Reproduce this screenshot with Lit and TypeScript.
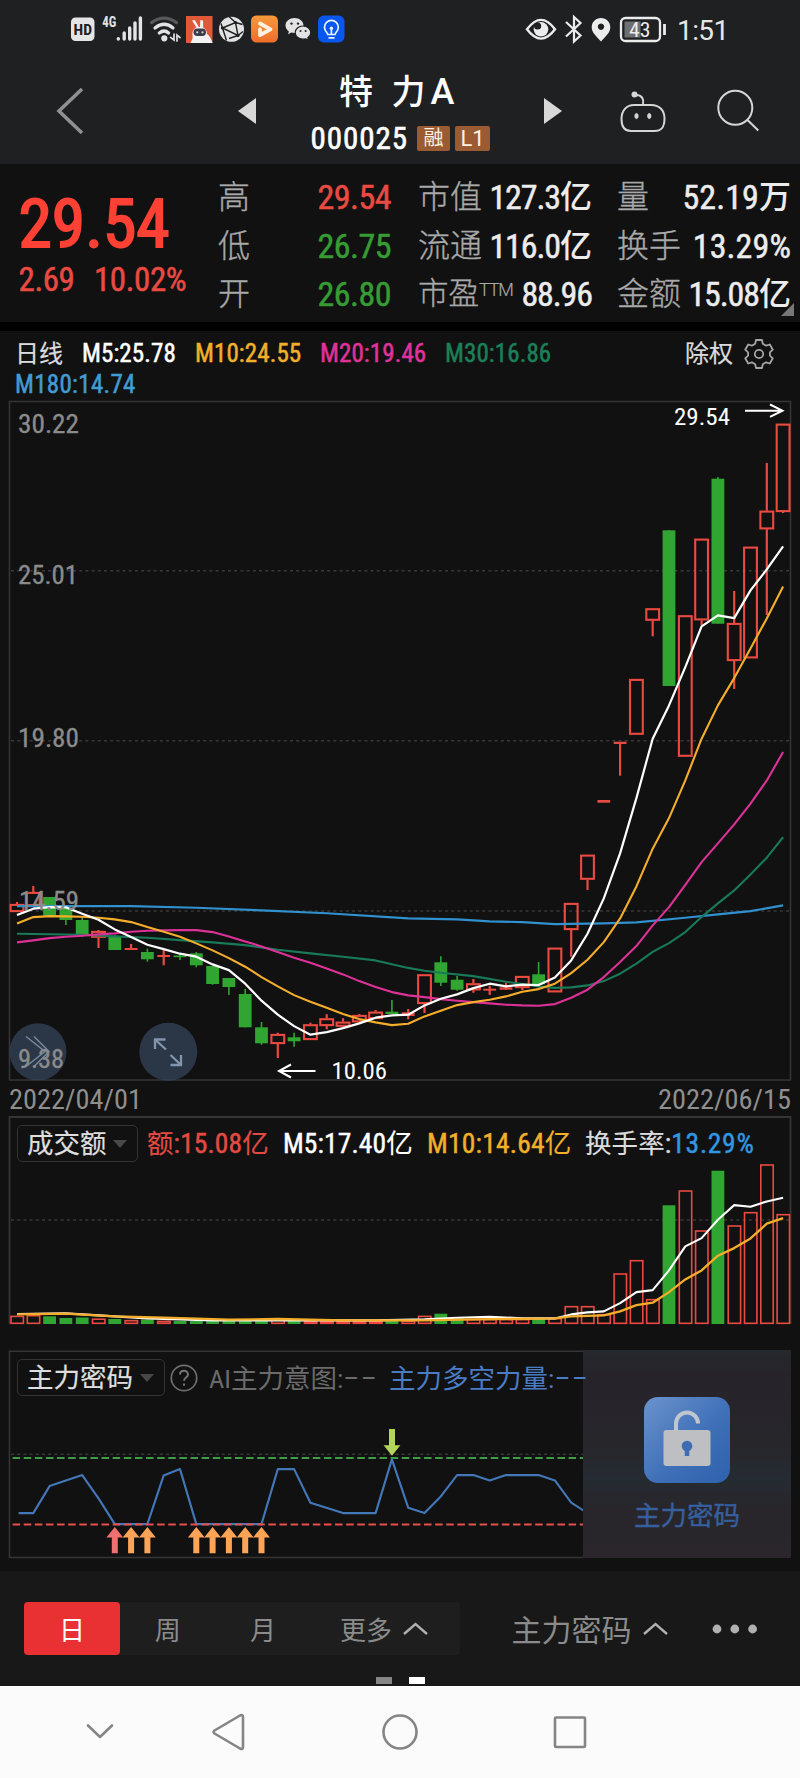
import { LitElement, html, svg, css } from 'lit';
import { customElement } from 'lit/decorators.js';

const RED = '#ea4a41';
const GREEN = '#31a531';

/** Horizontal centre of the n-th trading day. */
const cx = (i: number) => 17 + 16.3 * i;

type Candle = ['r' | 'g', number, number, number, number];

/** kind, body top, body bottom, wick top, wick bottom */
const candles: Candle[] = [
  ['r', 904, 912, 902, 912], ['r', 892, 906, 886, 906], ['g', 897, 915.7, 897, 915.7],
  ['g', 908, 920, 906, 925], ['g', 920, 934.3, 917, 936.7], ['r', 931, 937.7, 930, 948],
  ['g', 936, 950, 935, 950], ['r', 948, 950, 944, 950], ['g', 952, 959.3, 948.7, 961.7],
  ['r', 955, 957, 948.7, 965.3], ['g', 955.5, 957.2, 953.5, 960], ['g', 953.3, 965.3, 952, 967.3],
  ['g', 966, 984, 966, 984.7], ['g', 978, 987, 978, 995], ['g', 994, 1027.3, 989, 1027.3],
  ['g', 1027.3, 1043.3, 1022, 1044.7], ['r', 1034, 1044, 1032.7, 1058], ['g', 1037.3, 1041.3, 1032.7, 1046.7],
  ['r', 1024.3, 1040, 1022.7, 1040], ['r', 1018.3, 1026, 1014.3, 1029.3], ['r', 1021.7, 1026.7, 1018.3, 1028],
  ['r', 1015, 1022.3, 1014, 1022.3], ['r', 1011.7, 1019, 1010, 1019], ['g', 1011.7, 1014, 1000, 1014],
  ['r', 1012.3, 1016, 1009, 1019.3], ['r', 974.3, 1004, 974.3, 1013], ['g', 962.3, 982.7, 956.3, 986],
  ['g', 979.7, 989.7, 976, 990.7], ['r', 983.3, 990.3, 979, 992.7], ['r', 988.7, 990.3, 985.7, 995],
  ['r', 987.3, 989.7, 982.7, 990], ['r', 976, 988, 976, 990], ['g', 974.3, 984.3, 962, 984.3],
  ['r', 947.7, 992.3, 947.7, 992.3], ['r', 903, 930, 903, 956.7], ['r', 854.7, 879.7, 854.7, 890],
  ['r', 800, 802.7, 801, 801], ['r', 741.7, 744, 742, 775.7], ['r', 679, 734.7, 679, 734.7],
  ['r', 608.3, 620.7, 608.3, 636.3], ['g', 530.3, 686, 530.3, 686], ['r', 615.3, 756.7, 615.3, 756.7],
  ['r', 538.7, 620.3, 538.7, 625], ['g', 478.7, 623.7, 477, 623.7], ['r', 623, 661, 591, 689],
  ['r', 546.7, 658.3, 546.7, 658.3], ['r', 510.7, 529.3, 463, 615], ['r', 423.7, 512, 423.7, 513],
];

/** Points per line as [day, y]. */
type Pts = [number, number][];
const seq = (ys: number[]): Pts => ys.map((y, i) => [i, y]);

const ma5 = seq([914.7, 908.3, 906.7, 907, 913.3, 919.3, 929, 936.7, 944.3, 948.7, 953.3, 956.3, 964, 969.7, 983.3, 1000.3,
  1014.3, 1025.7, 1034.3, 1031.7, 1027.7, 1023, 1017.3, 1015, 1014.3, 1005, 998.3, 994, 987.7, 983.3, 986, 984.3, 984.7,
  977, 960, 933.3, 898, 853, 797.7, 738.3, 705, 666.7, 626, 615, 617.7, 590, 569, 546]);
const ma10 = seq([923, 916.7, 915.7, 916, 916.3, 917.3, 919, 921.7, 926.7, 931.3, 936.3, 943, 950, 957.7, 966.3, 976.7, 986,
  994.7, 1001.3, 1007.3, 1013.7, 1018.7, 1022, 1024.7, 1023.3, 1016, 1010.3, 1004.7, 1001.7, 999.3, 996, 991.3, 988.7,
  983.3, 972.7, 959.3, 941.7, 918, 886, 848.3, 817.7, 780, 738.3, 705, 677.7, 648, 618, 586]);
const ma20 = seq([942, 940, 937.7, 936.3, 935.3, 934, 933, 931.3, 930.3, 930, 929.7, 929.7, 931.7, 936, 941, 946, 951.7,
  957.3, 962.3, 968, 974, 980.7, 986.7, 991.7, 995, 996.7, 998.7, 1000.3, 1001.7, 1003, 1004.3, 1005, 1005.3, 1003.7,
  997.3, 989.3, 976.7, 961.7, 945.7, 925, 906.7, 884.5, 861.7, 843, 824, 803.3, 780, 751.7]);
const ma30: Pts = [[0, 933.3], [4, 934.3], [6, 936], [8, 937.3], [10, 939.7], [12, 942], [14, 944.7], [16, 949.3], [18, 953],
  [20, 956.3], [22, 960], [24, 967.5], [25, 970.3], [26, 972.3], [28, 975.7], [30, 981.3], [32, 986], [33, 987.5], [34, 987],
  [35, 985], [36, 980.7], [37, 973.3], [38, 963.3], [39, 951.5], [40, 942.7], [41, 931.7], [42, 916.7], [43, 903], [44, 890],
  [45, 874], [46, 857.3], [47, 836.7]];
const ma180: Pts = [[0, 905.7], [7, 905.7], [11, 907.3], [15, 910], [19, 912.9], [24, 918], [27, 919], [29, 921], [31, 921.7],
  [33, 923.7], [36, 923], [38, 922], [41, 917.3], [43, 914], [45, 910.7], [47, 905]];

const volumes: ['r' | 'g', number][] = [
  ['r', 1315.7], ['r', 1315], ['g', 1316.3], ['g', 1318], ['g', 1317.5], ['r', 1318.5], ['g', 1319], ['r', 1320], ['g', 1319.5],
  ['r', 1320.7], ['g', 1321], ['g', 1321], ['g', 1321], ['g', 1321], ['g', 1321], ['g', 1321], ['r', 1319.5], ['g', 1320],
  ['r', 1321], ['r', 1321], ['r', 1321], ['r', 1321], ['r', 1321], ['g', 1321], ['r', 1320.5], ['r', 1315.7], ['g', 1313.7],
  ['g', 1318], ['r', 1319], ['r', 1319], ['r', 1319], ['r', 1319], ['g', 1318], ['r', 1318], ['r', 1306], ['r', 1306],
  ['r', 1314], ['r', 1273.3], ['r', 1260], ['r', 1299], ['g', 1205.3], ['r', 1190.3], ['r', 1230.3], ['g', 1170.7],
  ['r', 1225.3], ['r', 1212], ['r', 1164.3], ['r', 1214],
];
const volMa5: Pts = [[0, 1313.6], [3, 1313], [5, 1315], [8, 1318], [12, 1320], [16, 1320], [22, 1320], [25, 1319], [27, 1317.3],
  [29, 1316.3], [31, 1318], [33, 1318], [34, 1314], [35, 1312], [36, 1311], [37, 1302.7], [38, 1291.7], [39, 1289.7],
  [40, 1270], [41, 1246], [42, 1237.7], [43, 1219.3], [44, 1204.7], [45, 1206.3], [46, 1201], [47, 1197.3]];
const volMa10: Pts = [[0, 1314], [3, 1313.3], [6, 1316], [9, 1317.3], [13, 1319.3], [16, 1318.6], [20, 1320], [25, 1320],
  [28, 1319], [33, 1318], [34, 1316], [36, 1315], [37, 1311], [38, 1304.7], [39, 1302.3], [40, 1291.7], [41, 1279],
  [42, 1270], [43, 1255.3], [44, 1247.7], [45, 1238], [46, 1223.3], [47, 1217.7]];

const power: Pts = [[0.1, 1512.7], [1, 1512.7], [2, 1485.7], [4, 1474.7], [5, 1498], [6, 1523.7], [8, 1523.7], [9, 1475],
  [10, 1468.7], [11, 1523.7], [15, 1523.7], [16, 1468.7], [17, 1468.7], [18, 1502.3], [20, 1512.7], [22, 1512.7], [23, 1459],
  [24, 1507.3], [25, 1512.7], [26, 1496], [27, 1474.7], [28, 1474.7], [29, 1480], [30, 1474.7], [32, 1474.7], [33, 1480],
  [34, 1502.3], [34.75, 1510]];

const line = (pts: Pts, color: string, w = 2.1) =>
  svg`<polyline points=${pts.map(([i, y]) => `${cx(i).toFixed(1)},${y + 0.4}`).join(' ')} fill="none" stroke=${color} stroke-width=${w} stroke-linejoin="round"/>`;

const candle = ([k, t, b, h, l]: Candle, i: number) => {
  const x = cx(i);
  if (k === 'g') {
    return svg`<rect x=${x - 6.4} y=${t} width="12.8" height=${b - t} fill=${GREEN}/>
      <path d="M${x} ${h}V${l}" stroke=${GREEN} stroke-width="1.6"/>`;
  }
  if (b - t < 5) {
    return svg`<rect x=${x - 6.4} y=${t} width="12.8" height=${Math.max(b - t, 2)} fill=${RED}/>
      <path d="M${x} ${h}V${l}" stroke=${RED} stroke-width="2.2"/>`;
  }
  return svg`<rect x=${x - 6.4} y=${t + 0.9} width="12.8" height=${b - t - 1.8} fill="none" stroke=${RED} stroke-width="2.1"/>
    <path d="M${x} ${h}V${t}M${x} ${b}V${l}" stroke=${RED} stroke-width="2.2"/>`;
};

const volume = ([k, t]: ['r' | 'g', number], i: number) => k === 'g'
  ? svg`<rect x=${cx(i) - 6.4} y=${t} width="12.8" height=${1324 - t} fill=${GREEN}/>`
  : svg`<rect x=${cx(i) - 6} y=${t + 0.7} width="12.4" height=${Math.max(1323.3 - t - 0.7, 1)} fill="none" stroke=${RED} stroke-width="1.6"/>`;

const label = (x: number, y: number, w: number, text: string, cls = 'axis') =>
  svg`<text class=${cls} x=${x} y=${y} textLength=${w} lengthAdjust="spacingAndGlyphs">${text}</text>`;

const upArrow = (i: number, color: string) =>
  svg`<path d="M${cx(i)} 1527l8.4 10.4h-5.4V1553.3h-6V1537.4h-5.4z" fill=${color}/>`;

@customElement('status-bar')
class StatusBar extends LitElement {
  static styles = css`
    :host { display: flex; align-items: center; height: 58px; padding: 0 76px 0 71px; box-sizing: border-box; }
    .group { display: flex; align-items: center; gap: 7px; }
    .right { margin-left: auto; gap: 9px; }
    svg { display: block; overflow: visible; }
    text { font-family: "Roboto Condensed", Roboto, sans-serif; }
    .clock { font: 28px/30px "Roboto", sans-serif; color: #e6e6e6; letter-spacing: -.6px; padding: 3px 0 0 2px; width: 47px; white-space: nowrap; }
  `;
  render() {
    return html`
      <div class="group">
        <svg width="24" height="28" viewBox="71 15 24 28"><rect x="71" y="17.5" width="23.5" height="23.5" rx="4.5" fill="#e4e4e4"/><text x="73.6" y="34.8" font-size="15" font-weight="700" fill="#1f2021" textLength="18.5" lengthAdjust="spacingAndGlyphs">HD</text></svg>
        <svg width="40" height="28" viewBox="102 15 40 28"><text x="102.3" y="27.2" font-size="14.5" font-weight="700" fill="#e4e4e4" textLength="14" lengthAdjust="spacingAndGlyphs">4G</text>
          <g stroke="#e4e4e4" stroke-width="3.4" stroke-linecap="round"><path d="M118.3 38.6v.4M124.2 33v6M129.7 28v11M135 23v16M140.4 18v21"/></g></svg>
        <svg width="30" height="28" viewBox="149 15 30 28" fill="none" stroke="#e4e4e4" stroke-width="3.2" stroke-linecap="round">
          <path d="M151.6 22.6Q164 13.5 176.6 22.6" stroke="#58595a"/><path d="M155 28Q164.3 20.5 173 28M159.3 33Q164.3 29 168.6 33"/><circle cx="164.3" cy="38.3" r="1.5"/>
          <path d="M174 34v6l-3.4-2.6M177 41v-6l3 2.6" stroke-width="1.7"/></svg>
        <svg width="26" height="28" viewBox="185 15 26 28"><rect x="185" y="16" width="26.5" height="27" fill="#e2593a"/>
          <path d="M189.500 43c2-4 2.500-5 2-8-.500-4 1.500-6.500 4-7.500l-4.500-7 2.800-.6 4 7 1.200.1.400-7 2.600.4.200 7.200c2.600 1.300 3.800 3.800 3.800 6.400 2.500 1.500 4.300 4.500 5.500 9z" fill="#f3f3f3"/>
          <rect x="192.500" y="28.500" width="12.500" height="7.500" rx="3.700" fill="#3b3e49"/><circle cx="196.200" cy="32.300" r="1.100" fill="#d8dbe4"/><circle cx="201.500" cy="32.300" r="1.100" fill="#d8dbe4"/></svg>
        <svg width="25" height="28" viewBox="219 15 25 28"><circle cx="231.5" cy="29.3" r="12.5" fill="#e2e2e2"/>
          <g fill="none" stroke="#1f2021" stroke-width="1.4"><path d="M222.500 28l13-5.500 2.500 13zM235.500 22.500l-6.500-6M238 35.500l5-4M238 35.500l-9 3M222.500 28l4 12.500M235.500 22.500l7 2M222.500 28l-1.500-4.500"/></g>
          <g fill="#1f2021"><circle cx="222.5" cy="28" r="1.6"/><circle cx="235.5" cy="22.5" r="1.6"/><circle cx="238" cy="35.5" r="1.6"/></g></svg>
        <svg width="27" height="28" viewBox="251 15 27 28"><defs><linearGradient id="play" x2="0" y2="1"><stop stop-color="#f59a3c"/><stop offset="1" stop-color="#f06d2a"/></linearGradient></defs>
          <rect x="251" y="15.5" width="27" height="27" rx="5.5" fill="url(#play)"/><path d="M260 23.500l10.500 5.800-10.500 5.700M260 29.500V35" fill="none" stroke="#fff1e2" stroke-width="3.800" stroke-linejoin="round" stroke-linecap="round"/></svg>
        <svg width="26" height="28" viewBox="285 15 26 28"><path d="M294.500 18c-5 0-9 3.300-9 7.500 0 2.300 1.300 4.500 3.400 5.900l-.8 2.900 3.300-1.700c1 .3 2 .4 3.100.4 5 0 9-3.300 9-7.500s-4-7.500-9-7.500z" fill="#e2e2e2"/>
          <path d="M303 26c-4.400 0-7.800 3-7.800 6.600 0 3.700 3.400 6.600 7.800 6.600.9 0 1.800-.1 2.600-.4l2.900 1.600-.7-2.600c1.800-1.200 3-3.100 3-5.200 0-3.600-3.400-6.600-7.800-6.600z" fill="#e2e2e2" stroke="#1f2021" stroke-width="1.200"/>
          <g fill="#1f2021"><circle cx="291.500" cy="23.600" r="1.200"/><circle cx="298" cy="23.600" r="1.200"/><circle cx="300.500" cy="31" r="1"/><circle cx="305.600" cy="31" r="1"/></g></svg>
        <svg width="27" height="28" viewBox="318 15 27 28"><rect x="318" y="15.5" width="26.5" height="27" rx="6" fill="#0a57ee"/>
          <g fill="none" stroke="#e9f2ff" stroke-width="1.700"><path d="M327.800 34.500c-.4-2-3.300-3.300-3.300-7.300a6.900 6.900 0 0 1 13.800 0c0 4-2.900 5.300-3.300 7.300zM328.500 37.800h6M331.400 34.500V29"/></g><circle cx="331.400" cy="28.300" r="1.700" fill="#e9f2ff"/></svg>
      </div>
      <div class="group right">
        <svg width="30" height="28" viewBox="526 15 30 28"><path d="M527 29.300Q541 10.500 555 29.300Q541 48 527 29.300z" fill="none" stroke="#ececec" stroke-width="2.400"/><circle cx="541" cy="29.300" r="7.300" fill="#ececec"/><circle cx="537.600" cy="26" r="3.600" fill="#1f2021"/></svg>
        <svg width="17" height="28" viewBox="565 15 17 28"><path d="M566 22l14.500 13.500-6.500 6V17l6.500 6L566 36.500" fill="none" stroke="#ececec" stroke-width="2.200"/></svg>
        <svg width="20" height="28" viewBox="591 15 20 28"><path fill-rule="evenodd" d="M601 18c-5.300 0-9.300 4-9.300 9.300 0 5.700 5 9.200 9.300 14.200 4.300-5 9.300-8.500 9.300-14.200 0-5.300-4-9.300-9.300-9.300zm0 5.500a3.200 3.200 0 1 0 .01 0z" fill="#ececec"/></svg>
        <svg width="46" height="28" viewBox="621 15 46 28"><rect x="622" y="18" width="39" height="23" rx="4.500" fill="none" stroke="#ececec" stroke-width="2.300"/><rect x="625.500" y="21.500" width="16" height="16" fill="#6e6f70"/><path d="M665.500 24v11" stroke="#ececec" stroke-width="2.800"/>
          <text x="630" y="36.800" font-size="20" fill="#ececec" textLength="21.500" lengthAdjust="spacingAndGlyphs">43</text></svg>
        <div class="clock">1:51</div>
      </div>`;
  }
}

@customElement('title-bar')
class TitleBar extends LitElement {
  static styles = css`
    :host { display: grid; grid-template-columns: 222px 50px 258px 50px 220px; height: 106px; color: #fff; }
    svg { display: block; }
    .mid { display: flex; flex-direction: column; }
    .name { font: 500 34px/50px "Roboto", "Noto Sans CJK SC", sans-serif; padding: 9px 0 0 67px; white-space: nowrap; word-spacing: 10px; }
    .name b { font-weight: 500; font-size: 36px; padding-left: 5px; }
    .code { display: flex; align-items: center; height: 38px; font: 31px/38px "Roboto Condensed", sans-serif; letter-spacing: .95px; -webkit-text-stroke: .6px #fff; margin: 2px 0 0 38.500px; gap: 5px; }
    .code span { width: 101.500px; padding-top: 1px; }
    .tag { font: 20px/25px "Roboto", "Noto Sans CJK SC", sans-serif; background: #9a5b33; border-radius: 2px; width: 33px; height: 25px; text-align: center; color: #fff2e2; letter-spacing: 0; -webkit-text-stroke: 0; }
    .tag.l { width: 35px; font-size: 22px; }
  `;
  render() {
    return html`
      <svg width="222" height="106" viewBox="0 58 222 106"><path d="M82 89L59 111l23 22" fill="none" stroke="#8f9091" stroke-width="3.600"/></svg>
      <svg width="50" height="106" viewBox="222 58 50 106"><path d="M238 111l18-13v26z" fill="#d8d8d8"/></svg>
      <div class="mid">
        <div class="name">特 力<b>A</b></div>
        <div class="code"><span>000025</span><div class="tag">融</div><div class="tag l">L1</div></div>
      </div>
      <svg width="50" height="106" viewBox="530 58 50 106"><path d="M562 111l-18-13v26z" fill="#d8d8d8"/></svg>
      <svg width="220" height="106" viewBox="580 58 220 106" fill="none" stroke="#d6d6d6" stroke-width="2">
        <path d="M634 105h17c8 0 13.500 5 13.500 13.500 0 9-3 12.500-10 12.500h-23.500c-6 0-9.500-3.500-9.500-12C621.500 110 627 105 634 105z"/>
        <path d="M643 104c1-5-1-9-7-9"/><circle cx="634.500" cy="94.500" r="2" fill="#d6d6d6"/>
        <ellipse cx="636.500" cy="116" rx="1.600" ry="2.600" fill="#d6d6d6" stroke-width="1"/><ellipse cx="649.300" cy="116" rx="1.600" ry="2.600" fill="#d6d6d6" stroke-width="1"/>
        <circle cx="735.300" cy="107.700" r="17"/><path d="M747.500 120l10.800 10.500"/>
      </svg>`;
  }
}

@customElement('quote-stats')
class QuoteStats extends LitElement {
  static styles = css`
    :host { display: grid; grid-template-columns: 218px 173px 174px 174px; height: 158px; background: #111; font-family: "Roboto Condensed", "Noto Sans CJK SC", sans-serif; color: #ececec; position: relative; }
    .price { padding-left: 18.500px; color: #fd4134; }
    .big { font-size: 67.500px; line-height: 70px; height: 70px; margin-top: 24.500px; -webkit-text-stroke: 1.900px #fd4134; white-space: nowrap; }
    .delta { display: flex; gap: 19.500px; font-size: 33px; line-height: 40px; margin-top: 1px; color: #ea4a42; letter-spacing: -.4px; -webkit-text-stroke: .5px #ea4a42; }
    .col { padding-top: 9px; }
    .c2 { margin-left: 27px; margin-right: -27px; }
    .c3 { margin-left: 52px; margin-right: -52px; }
    .row { display: flex; justify-content: space-between; height: 48.700px; line-height: 48.700px; font-size: 34px; white-space: nowrap; }
    .k { font-size: 32px; color: #a9a9a9; font-weight: 300; display: flex; -webkit-text-stroke: .35px #a9a9a9; }
    .k .pe { font-size: 30.500px; }
    .k sup { font: 300 18px/39px "Roboto", sans-serif; letter-spacing: -1.200px; vertical-align: top; -webkit-text-stroke: .2px #a9a9a9; }
    .v { letter-spacing: -.5px; -webkit-text-stroke: .5px currentColor; display: flex; }
    .v.tight { letter-spacing: -1.100px; }
    .v.wide { letter-spacing: .1px; }
    .v i { font-style: normal; font-size: 32px; letter-spacing: 0; -webkit-text-stroke: 0; font-weight: 500; }
    .up { color: #ea4a42; } .down { color: #379c34; }
    .corner { position: absolute; right: 6px; bottom: 6px; width: 13px; height: 13px; background: #777; clip-path: polygon(100% 0, 100% 100%, 0 100%); }
  `;
  row(k: unknown, v: string, unit = '', cls = '') {
    return html`<div class="row"><span class="k">${k}</span><span class="v ${cls}">${v}${unit ? html`<i>${unit}</i>` : ''}</span></div>`;
  }
  render() {
    return html`
      <div class="price"><div class="big">29.54</div><div class="delta"><span>2.69</span><span>10.02%</span></div></div>
      <div class="col">${this.row('高', '29.54', '', 'up')}${this.row('低', '26.75', '', 'down')}${this.row('开', '26.80', '', 'down')}</div>
      <div class="col c2">${this.row('市值', '127.3', '亿', 'tight')}${this.row('流通', '116.0', '亿', 'tight')}${this.row(html`<span class="pe">市盈</span><sup>TTM</sup>`, '88.96', '', 'tight')}</div>
      <div class="col c3">${this.row('量', '52.19', '万', 'wide')}${this.row('换手', '13.29%', '', 'wide')}${this.row('金额', '15.08', '亿', 'tight')}</div>
      <span class="corner"></span>`;
  }
}

@customElement('k-chart')
class KChart extends LitElement {
  static styles = css`
    :host { display: block; height: 785px; font-family: "Roboto Condensed", "Noto Sans CJK SC", sans-serif; }
    .legend { display: flex; align-items: center; height: 30px; line-height: 30px; padding: 8px 25px 0 15px; font-size: 25px; letter-spacing: .1px; white-space: nowrap; }
    .legend span { -webkit-text-stroke: .5px currentColor; }
    .legend .cn { font-size: 24px; color: #dcdcdc; letter-spacing: 0; -webkit-text-stroke: .2px #dcdcdc; }
    .m5 { color: #fff; width: 113px; margin-left: 19px; } .m10 { color: #f2b02a; width: 125px; } .m20 { color: #e0329b; width: 125px; } .m30 { color: #1b8058; } .m180 { color: #429bd4; }
    .cq { margin-left: auto; margin-right: 10px; }
    .second { padding-top: 0; height: 31px; line-height: 31px; letter-spacing: .3px; }
    svg { display: block; }
    text { font-family: "Roboto Condensed", sans-serif; }
    .axis { font-size: 25px; fill: #8b8b8b; stroke: #8b8b8b; stroke-width: .3px; }
    .date { font-size: 27px; fill: #8f8f8f; }
    .mark { font-size: 24px; fill: #fff; }
  `;
  render() {
    return html`
      <div class="legend"><span class="cn">日线</span><span class="m5">M5:25.78</span><span class="m10">M10:24.55</span><span class="m20">M20:19.46</span><span class="m30">M30:16.86</span>
        <span class="cn cq">除权</span>
        <svg width="32" height="32" viewBox="-16 -16 32 32" fill="none" stroke="#a5a5a5" stroke-width="1.800" stroke-linejoin="round">
          <path d="M-3-14h6l.8 3.800 3.300 1.900 3.700-1.200 3 5.200-2.900 2.600v3.400l2.900 2.600-3 5.200-3.700-1.200-3.300 1.900-.8 3.800h-6l-.8-3.800-3.300-1.900-3.700 1.200-3-5.200 2.900-2.600v-3.400l-2.900-2.600 3-5.200 3.700 1.200 3.300-1.900z"/><circle r="4.200"/></svg>
      </div>
      <div class="legend second"><span class="m180">M180:14.74</span></div>
      <svg width="800" height="716" viewBox="0 400 800 716">
        <path d="M9.500 401.500H790.500V1080H9.500z" fill="none" stroke="#353535" stroke-width="1.600"/>
        <path d="M11 570.700H790M11 740.700H790M11 911H790" stroke="#383838" stroke-width="1.600" stroke-dasharray="3 3.200"/>
        ${candles.map(candle)}
        ${line(ma180, '#3191cf')}${line(ma30, '#187a58')}${line(ma20, '#dc3298')}${line(ma10, '#f5ae2b')}${line(ma5, '#fff', 2.2)}
        ${label(18, 432.500, 61, '30.22')}${label(18, 584, 60, '25.01')}${label(18, 746.500, 61, '19.80')}${label(19, 909.800, 60, '14.59')}
        <circle cx="38" cy="1051.800" r="28.500" fill="#36475d" fill-opacity=".72"/>
        <path d="M26 1036.500l19 15-19 15M34 1036.500l15 15-15 15" fill="none" stroke="#76889f" stroke-width="1.500"/>
        ${label(18, 1067.500, 46, '9.38')}
        <circle cx="168.300" cy="1051.800" r="29" fill="#36475d" fill-opacity=".72"/>
        <path d="M166 1049.500l-11-10M155 1049V1039.500h10.500M170.500 1055l10.500 10M181 1055V1065H170.500" fill="none" stroke="#8295ad" stroke-width="2.300"/>
        <path d="M315.500 1071H279M291 1064.500L279 1071l12 6.500" fill="none" stroke="#fff" stroke-width="2"/>
        ${label(331.500, 1078.700, 55.500, '10.06', 'mark')}
        <path d="M745 410.700H782.500M770 404.500l12.500 6.200-12.500 6.200" fill="none" stroke="#fff" stroke-width="2"/>
        ${label(674, 424.700, 56, '29.54', 'mark')}
        ${label(9, 1108.500, 133, '2022/04/01', 'date')}${label(658, 1108.500, 133, '2022/06/15', 'date')}
      </svg>`;
  }
}

const dropStyles = css`
  .drop { display: flex; align-items: center; box-sizing: border-box; height: 37px; border: 1.500px solid #333; border-radius: 5px; color: #dedede; padding: 1px 10px 0 9px; font-size: 26.500px; line-height: 34px; white-space: nowrap; -webkit-text-stroke: .2px #dedede; flex: none; }
  .drop::after { content: ""; margin-left: auto; border: 7px solid transparent; border-top: 8px solid #484848; border-bottom: 0; }
`;

@customElement('turnover-chart')
class TurnoverChart extends LitElement {
  static styles = [dropStyles, css`
    :host { display: grid; height: 234px; font-family: "Roboto Condensed", "Noto Sans CJK SC", sans-serif; }
    svg, .head { grid-area: 1 / 1; }
    svg { display: block; }
    .head { display: flex; align-items: center; height: 37px; padding: 9px 0 0 17px; font-size: 27.500px; line-height: 39px; letter-spacing: .1px; white-space: nowrap; }
    .head span { -webkit-text-stroke: .45px currentColor; display: flex; }
    i { font-style: normal; font-size: 26.500px; -webkit-text-stroke: .1px currentColor; }
    .drop { width: 121px; letter-spacing: 0; }
    .r { color: #e24b43; width: 136px; margin-left: 9px; } .w { color: #fff; width: 144px; } .o { color: #f2b02a; width: 158px; letter-spacing: .2px; } .g { color: #dcdcdc; } .b { color: #2f98e2; letter-spacing: .7px; }
  `];
  render() {
    return html`
      <svg width="800" height="234" viewBox="0 1116 800 234">
        <path d="M9.500 1324V1117H790.500V1324" fill="none" stroke="#353535" stroke-width="1.800"/>
        <path d="M11 1220H790" stroke="#383838" stroke-width="1.600" stroke-dasharray="3 3.200"/>
        ${volumes.map(volume)}${line(volMa5, '#fff')}${line(volMa10, '#f5ae2b', 2.3)}
      </svg>
      <div class="head"><div class="drop">成交额</div>
        <span class="r"><i>额</i>:15.08<i>亿</i></span><span class="w">M5:17.40<i>亿</i></span><span class="o">M10:14.64<i>亿</i></span><span class="g"><i>换手率</i>:</span><span class="b">13.29%</span></div>`;
  }
}

@customElement('force-chart')
class ForceChart extends LitElement {
  static styles = [dropStyles, css`
    :host { display: grid; grid-template-columns: 583px 208px 9px; height: 221px; font-family: "Roboto Condensed", "Noto Sans CJK SC", sans-serif; }
    .plot { grid-area: 1 / 1; display: block; }
    .head { grid-area: 1 / 1 / 2 / 3; z-index: 1; display: flex; align-items: center; height: 37px; padding: 9px 0 0 17px; font-size: 26.500px; line-height: 37px; white-space: nowrap; }
    .drop { width: 148px; }
    .q { display: block; margin: 0 11px 0 5px; flex: none; }
    .head span { padding-top: 1px; flex: none; }
    .ai { color: #6b6b6b; width: 180px; } .pw { color: #4a7cc4; }
    b { font: 28px/30px Roboto, sans-serif; letter-spacing: 1.300px; }
    .lock { grid-area: 1 / 2; height: 208px; background: linear-gradient(180deg, #25282d 0, #26242a 12%, #27262b 45%, #252b32 62%, #28262b 76%, #2a262b 100%); display: flex; flex-direction: column; align-items: center; }
    .lock svg { display: block; margin: 47px 0 0 -1px; }
    .lock div { font-size: 26.500px; line-height: 38px; color: #365f9e; margin-top: 14px; -webkit-text-stroke: .4px #365f9e; }
  `];
  render() {
    return html`
      <svg class="plot" width="583" height="221" viewBox="0 1350 583 221">
        <path d="M583 1351.300H9.500V1557.500H583" fill="none" stroke="#353535" stroke-width="1.600"/>
        <path d="M11 1454.300H583" stroke="#383838" stroke-width="1.500" stroke-dasharray="3 3.200"/>
        <path d="M12.600 1458H583" stroke="#3f9d47" stroke-width="2.200" stroke-dasharray="7.500 3.620"/>
        ${line(power, '#4477b8')}
        <path d="M12.600 1524.500H583" stroke="#e8504c" stroke-width="2.200" stroke-dasharray="7.500 3.620"/>
        ${upArrow(6, '#f07070')}${[7, 8, 11, 12, 13, 14, 15].map(i => upArrow(i, '#ffa457'))}
        <path d="M389 1429h6v16.300h5.400L392 1455.700l-8.400-10.400h5.400z" fill="#b4d55c"/>
      </svg>
      <div class="head"><div class="drop">主力密码</div>
        <svg class="q" width="28" height="28" viewBox="-14 -14 28 28"><circle r="12.700" fill="none" stroke="#6e6e6e" stroke-width="1.700"/><path d="M-4-3.500c0-5 8-5 8 0 0 3-4 3-4 6.300M0 5.500v2.200" fill="none" stroke="#777" stroke-width="1.900"/></svg>
        <span class="ai">AI主力意图:<b>−−</b></span><span class="pw">主力多空力量:<b>−−</b></span></div>
      <div class="lock">
        <svg width="86" height="86" viewBox="0 0 86 86"><defs><linearGradient id="lk" x2="1" y2="1"><stop stop-color="#6c93cc"/><stop offset=".55" stop-color="#3f70b8"/><stop offset="1" stop-color="#2f62ad"/></linearGradient></defs>
          <rect width="86" height="86" rx="14" fill="url(#lk)"/><rect x="19.500" y="33" width="47" height="36" rx="3" fill="#bdbfc2"/>
          <path d="M32 34V26.500a11 11 0 0 1 22 0" fill="none" stroke="#bfc6d0" stroke-width="4"/><circle cx="43" cy="49" r="5.300" fill="#3d6cb2"/><path d="M43 50v9" stroke="#3d6cb2" stroke-width="4.500"/></svg>
        <div>主力密码</div>
      </div>`;
  }
}

@customElement('period-bar')
class PeriodBar extends LitElement {
  static styles = css`
    :host { display: block; height: 115px; background: #181818; color: #8b8b8b; font: 26px/53px "Noto Sans CJK SC", sans-serif; }
    .row { display: flex; align-items: center; padding: 31px 0 0 24px; white-space: nowrap; }
    .seg { display: grid; grid-template-columns: 96px 95.500px 95px 149px; height: 53px; background: #1e1e1e; border-radius: 4px; text-align: center; }
    .on { background: #e93032; color: #fff; border-radius: 4px; }
    .more { display: flex; align-items: center; padding-left: 29.500px; }
    svg { display: block; margin-left: 11px; }
    .main { display: flex; align-items: center; margin-left: 52px; font-size: 30px; }
    .dots { margin-left: 44px; }
    .pager { display: flex; justify-content: center; gap: 17px; margin: 21.500px 0 0 0; }
    .pager i { width: 16px; height: 7px; background: #868686; } .pager i + i { background: #fff; }
  `;
  chevron() {
    return html`<svg width="25" height="14" viewBox="0 0 25 14"><path d="M1 12L12.500 2 24 12" fill="none" stroke="#b0b0b0" stroke-width="2.400"/></svg>`;
  }
  render() {
    return html`
      <div class="row"><div class="seg"><div class="on">日</div><div>周</div><div>月</div><div class="more">更多${this.chevron()}</div></div>
        <div class="main">主力密码${this.chevron()}</div>
        <svg class="dots" width="46" height="10" viewBox="0 0 46 10" fill="#b0b0b0"><circle cx="5" cy="5" r="4.400"/><circle cx="22.800" cy="5" r="4.400"/><circle cx="40.600" cy="5" r="4.400"/></svg></div>
      <div class="pager"><i></i><i></i></div>`;
  }
}

@customElement('app-root')
class AppRoot extends LitElement {
  static styles = css`
    :host { display: block; width: 800px; height: 1778px; overflow: hidden; background: #111; }
    .top { background: #1f2021; }
    .gap { height: 9px; background: #000; }
    .nav { display: block; background: #fbfbfb; }
  `;
  render() {
    return html`
      <div class="top"><status-bar></status-bar><title-bar></title-bar></div>
      <quote-stats></quote-stats>
      <div class="gap"></div>
      <k-chart></k-chart>
      <turnover-chart></turnover-chart>
      <force-chart></force-chart>
      <period-bar></period-bar>
      <svg class="nav" width="800" height="92" viewBox="0 1686 800 92" fill="none" stroke="#858585" stroke-width="2.600" stroke-linejoin="round" stroke-linecap="round">
        <path d="M88 1725.500l12 11.500 12-11.500M214.500 1730.500l25.500-15q3-1.500 3 1.500v30q0 3-3 1.500l-25.500-15q-2-1.500 0-3z"/><circle cx="400" cy="1732" r="16.500"/><rect x="555" y="1717.500" width="30" height="29.500" rx="1"/>
      </svg>`;
  }
}
